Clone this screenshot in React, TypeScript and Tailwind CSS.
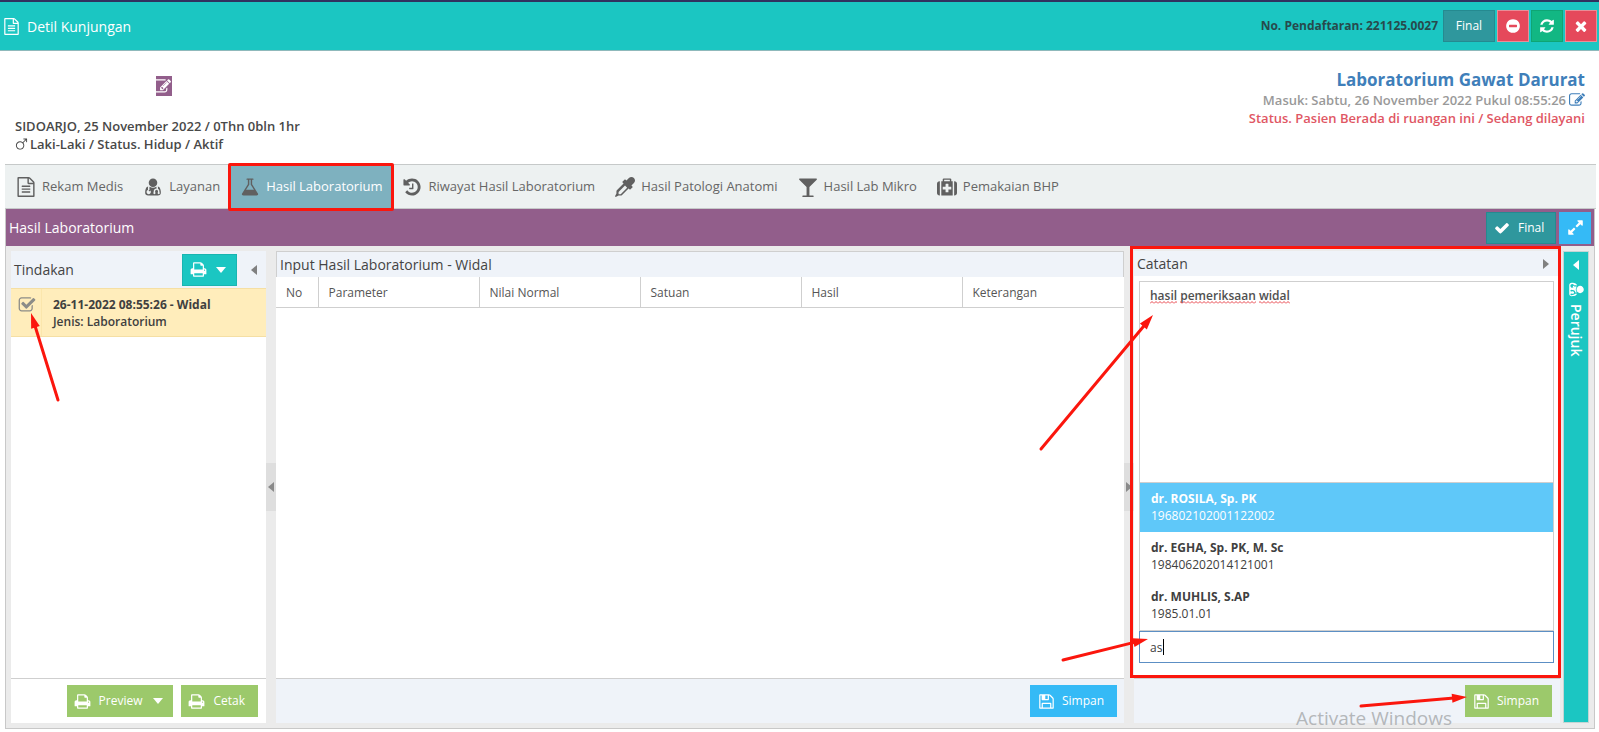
import React from 'react'

const ICONS = {
  fileText: 'M1596 380q28 28 48 76t20 88v1152q0 40-28 68t-68 28h-1344q-40 0-68-28t-28-68v-1600q0-40 28-68t68-28h896q40 0 88 20t76 48zm-444-244v376h376q-10-29-22-41l-313-313q-12-12-41-22zm384 1528v-1024h-416q-40 0-68-28t-28-68v-416h-768v1536h1280zm-1024-864q0-14 9-23t23-9h704q14 0 23 9t9 23v64q0 14-9 23t-23 9h-704q-14 0-23-9t-9-23v-64zm736 224q14 0 23 9t9 23v64q0 14-9 23t-23 9h-704q-14 0-23-9t-9-23v-64q0-14 9-23t23-9h704zm0 256q14 0 23 9t9 23v64q0 14-9 23t-23 9h-704q-14 0-23-9t-9-23v-64q0-14 9-23t23-9h704z',
  userMd: 'M640 1216q0 26-19 45t-45 19-45-19-19-45 19-45 45-19 45 19 19 45zM1600 1405q0 121-73 190t-194 69h-874q-121 0-194-69t-73-190q0-68 5.5-131t24-138 47-132.5 81-103 119-60.5q-22 52-22 120v203q-58 20-93 70t-35 111q0 80 56 136t136 56 136-56 56-136q0-61-35.5-111t-92.5-70v-203q0-62 25-93 132 104 295 104t295-104q25 31 25 93v64q-106 0-181 75t-75 181v89q-32 29-32 71 0 40 28 68t68 28 68-28 28-68q0-42-32-71v-89q0-52 38-90t90-38 90 38 38 90v89q-32 29-32 71 0 40 28 68t68 28 68-28 28-68q0-42-32-71v-89q0-68-34.5-127.5t-93.500-93.500q0-10 .5-42.500t0-48-2.500-41.500-7-47-13-40q68 15 120 60.500t81 103 47.500 132.500 24 138 5.500 131zM1280 512q0 159-112.500 271.500t-271.500 112.500-271.500-112.500-112.500-271.500 112.500-271.500 271.500-112.500 271.500 112.500 112.500 271.500z',
  flask: 'M1591 1447q56 89 21.500 153t-140.500 64h-1152q-106 0-140.500-64t21.500-153l503-793v-399h-64q-26 0-45-19t-19-45 19-45 45-19h512q26 0 45 19t19 45-19 45-45 19h-64v399zm-779-725l-272 430h712l-272-430-20-31v-436h-128v436z',
  history: 'M1664 896q0 156-61 298t-164 245-245 164-298 61q-172 0-327-72.5t-264-204.5q-7-10-6.5-22.5t8.5-20.5l137-138q10-9 25-9 16 2 23 12 73 95 179 147t225 52q104 0 198.5-40.5t163.5-109.5 109.5-163.5 40.5-198.5-40.5-198.5-109.5-163.5-163.5-109.5-198.5-40.5q-98 0-188 35.5t-160 101.5l137 138q31 30 14 69-17 40-59 40h-448q-26 0-45-19t-19-45v-448q0-42 40-59 39-17 69 14l130 129q107-101 244.5-156.5t284.5-55.5q156 0 298 61t245 164 164 245 61 298zm-640-288v448q0 14-9 23t-23 9h-320q-14 0-23-9t-9-23v-64q0-14 9-23t23-9h224v-352q0-14 9-23t23-9h64q14 0 23 9t9 23z',
  eyedropper: 'M1698 94q94 94 94 226.5t-94 225.5l-225 223 104 104q10 10 10 23t-10 23l-210 210q-10 10-23 10t-23-10l-105-105-603 603q-37 37-90 37h-203l-256 128-64-64 128-256v-203q0-53 37-90l603-603-105-105q-10-10-10-23t10-23l210-210q10-10 23-10t23 10l104 104 223-225q93-94 225.5-94t226.5 94zm-1186 1442l576-576-192-192-576 576v192h192z',
  glass: 'M1699 186q0 35-43 78l-632 632v768h320q26 0 45 19t19 45-19 45-45 19h-896q-26 0-45-19t-19-45 19-45 45-19h320v-768l-632-632q-43-43-43-78 0-23 18-36.5t38-17.5 43-4h1408q23 0 43 4t38 17.5 18 36.5z',
  medkit: 'M1280 1088v-192q0-14-9-23t-23-9h-224v-224q0-14-9-23t-23-9h-192q-14 0-23 9t-9 23v224h-224q-14 0-23 9t-9 23v192q0 14 9 23t23 9h224v224q0 14 9 23t23 9h192q14 0 23-9t9-23v-224h224q14 0 23-9t9-23zm-640-704h512v-128h-512v128zm-384 0v1280h-32q-92 0-158-66t-66-158v-832q0-92 66-158t158-66h32zm1152 0v1280h-1024v-1280h128v-160q0-40 28-68t68-28h576q40 0 68 28t28 68v160h128zm384 224v832q0 92-66 158t-158 66h-32v-1280h32q92 0 158 66t66 158z',
  print: 'M448 1536h896v-256h-896v256zm0-640h896v-384h-160q-40 0-68-28t-28-68v-160h-640v640zm1152 64q0-26-19-45t-45-19-45 19-19 45 19 45 45 19 45-19 19-45zm128 0v416q0 13-9.5 22.5t-22.5 9.5h-224v160q0 40-28 68t-68 28h-960q-40 0-68-28t-28-68v-160h-224q-13 0-22.5-9.5t-9.500-22.500v-416q0-79 56.500-135.500t135.500-56.500h64v-544q0-40 28-68t68-28h672q40 0 88 20t76 48l152 152q28 28 48 76t20 88v256h64q79 0 135.500 56.500t56.500 135.500z',
  check: 'M1671 566q0 40-28 68l-724 724-136 136q-28 28-68 28t-68-28l-136-136-362-362q-28-28-28-68t28-68l136-136q28-28 68-28t68 28l294 295 656-657q28-28 68-28t68 28l136 136q28 28 28 68z',
  times: 'M1490 1322q0 40-28 68l-136 136q-28 28-68 28t-68-28l-294-294-294 294q-28 28-68 28t-68-28l-136-136q-28-28-28-68t28-68l294-294-294-294q-28-28-28-68t28-68l136-136q28-28 68-28t68 28l294 294 294-294q28-28 68-28t68 28l136 136q28 28 28 68t-28 68l-294 294 294 294q28 28 28 68z',
  minusCircle: 'M1344 960v-128q0-26-19-45t-45-19h-768q-26 0-45 19t-19 45v128q0 26 19 45t45 19h768q26 0 45-19t19-45zm320-64q0 209-103 385.5t-279.5 279.5-385.5 103-385.5-103-279.5-279.5-103-385.5 103-385.5 279.5-279.5 385.5-103 385.5 103 279.5 279.5 103 385.5z',
  refresh: 'M1639 1056q0 5-1 7-64 268-268 434.5t-478 166.5q-146 0-282.5-55t-243.5-157l-129 129q-19 19-45 19t-45-19-19-45v-448q0-26 19-45t45-19h448q26 0 45 19t19 45-19 45l-137 137q71 66 161 102t187 36q134 0 250-65t186-179q11-17 53-117 8-23 30-23h192q13 0 22.5 9.5t9.5 22.5zm25-800v448q0 26-19 45t-45 19h-448q-26 0-45-19t-19-45 19-45l138-138q-148-137-349-137-134 0-250 65t-186 179q-11 17-53 117-8 23-30 23h-199q-13 0-22.5-9.5t-9.5-22.5v-7q65-268 270-434.5t480-166.5q146 0 284 55.5t245 156.5l130-129q19-19 45-19t45 19 19 45z',
  expand: 'M883 1056q0 13-10 23l-332 332 144 144q19 19 19 45t-19 45-45 19h-448q-26 0-45-19t-19-45v-448q0-26 19-45t45-19 45 19l144 144 332-332q10-10 23-10t23 10l114 114q10 10 10 23zm781-864v448q0 26-19 45t-45 19-45-19l-144-144-332 332q-10 10-23 10t-23-10l-114-114q-10-10-10-23t10-23l332-332-144-144q-19-19-19-45t19-45 45-19h448q26 0 45 19t19 45z',
  edit: 'M888 1184l116-116-152-152-116 116v56h96v96h56zm440-720q-16-16-33 1l-350 350q-17 17-1 33t33-1l350-350q17-17 1-33zm80 594v190q0 119-84.5 203.5t-203.5 84.5h-832q-119 0-203.5-84.5t-84.5-203.5v-832q0-119 84.5-203.5t203.5-84.5h832q63 0 117 25 15 7 18 23 3 17-9 29l-49 49q-14 14-32 8-23-6-45-6h-832q-66 0-113 47t-47 113v832q0 66 47 113t113 47h832q66 0 113-47t47-113v-126q0-13 9-22l64-64q15-15 35-7t20 29zm-96-738l288 288-672 672h-288v-288zm444 132l-92 92-288-288 92-92q28-28 68-28t68 28l152 152q28 28 28 68t-28 68z',
  save: 'M512 1536h768v-384h-768v384zm896 0h128v-896q0-14-10-38.5t-20-34.5l-281-281q-10-10-34-20t-39-10v416q0 40-28 68t-68 28h-576q-40 0-68-28t-28-68v-416h-128v1280h128v-416q0-40 28-68t68-28h832q40 0 68 28t28 68v416zm-384-928v-320q0-13-9.5-22.5t-22.5-9.5h-192q-13 0-22.5 9.5t-9.5 22.5v320q0 13 9.5 22.5t22.5 9.5h192q13 0 22.5-9.5t9.5-22.5zm640 32v928q0 40-28 68t-68 28h-1344q-40 0-68-28t-28-68v-1344q0-40 28-68t68-28h928q40 0 88 20t76 48l280 280q28 28 48 76t20 88z',
  mars: 'M1600 64q26 0 45 19t19 45v416q0 14-9 23t-23 9h-64q-14 0-23-9t-9-23v-262l-382 383q126 156 126 359 0 117-45.5 223.5t-123 184-184 123-223.5 45.5-223.5-45.5-184-123-123-184-45.5-223.5 45.5-223.5 123-184 184-123 223.5-45.5q203 0 359 126l382-382h-261q-14 0-23-9t-9-23v-64q0-14 9-23t23-9h416zm-896 1408q185 0 316.5-131.5t131.5-316.5-131.5-316.5-316.5-131.5-316.5 131.5-131.5 316.5 131.5 316.5 316.5 131.5z',
  checkSquare: 'M1472 930v318q0 119-84.5 203.5t-203.5 84.5h-832q-119 0-203.5-84.5t-84.5-203.5v-832q0-119 84.5-203.5t203.5-84.5h832q63 0 117 25 15 7 18 23 3 17-9 29l-49 49q-10 10-23 10-3 0-9-2-23-6-45-6h-832q-66 0-113 47t-47 113v832q0 66 47 113t113 47h832q66 0 113-47t47-113v-254q0-13 9-22l64-64q10-10 23-10 6 0 12 3 20 8 20 29zm231-489l-814 814q-24 24-57 24t-57-24l-430-430q-24-24-24-57t24-57l110-110q24-24 57-24t57 24l263 263 647-647q24-24 57-24t57 24l110 110q24 24 24 57t-24 57z',
}

type IconName = keyof typeof ICONS

function Icon({ name, className = 'size-4' }: { name: IconName; className?: string }) {
  return (
    <svg viewBox="0 0 1792 1792" fill="currentColor" className={`shrink-0 ${className}`} aria-hidden>
      <path d={ICONS[name]} />
    </svg>
  )
}

function Triangle({ dir, className = '' }: { dir: 'left' | 'right' | 'down'; className?: string }) {
  if (dir === 'down') {
    return (
      <svg viewBox="0 0 10 6" fill="currentColor" className={`h-[6px] w-[10px] shrink-0 ${className}`} aria-hidden>
        <path d="M0 0h10L5 6z" />
      </svg>
    )
  }
  return (
    <svg viewBox="0 0 6 10" fill="currentColor" className={`h-[10px] w-[6px] shrink-0 ${className}`} aria-hidden>
      <path d={dir === 'left' ? 'M6 0v10L0 5z' : 'M0 0v10l6-5z'} />
    </svg>
  )
}

type ArrowProps = { w: number; h: number; from: [number, number]; to: [number, number]; className: string }

// red pointer with a solid head at the `to` end
function Arrow({ w, h, from, to, className }: ArrowProps) {
  const angle = (Math.atan2(to[1] - from[1], to[0] - from[0]) * 180) / Math.PI
  const len = Math.hypot(to[0] - from[0], to[1] - from[1])
  return (
    <svg
      width={w}
      height={h}
      className={`pointer-events-none absolute z-30 overflow-visible ${className}`}
      aria-hidden
    >
      <g transform={`translate(${from[0]} ${from[1]}) rotate(${angle})`} fill="#fb160d">
        <path d={`M0 0H${len - 10}`} stroke="#fb160d" strokeWidth="3" strokeLinecap="round" />
        <path d={`M${len} 0l-15 4.500v-9z`} />
      </g>
    </svg>
  )
}

const tabs: { icon: IconName; label: string; active?: boolean }[] = [
  { icon: 'fileText', label: 'Rekam Medis' },
  { icon: 'userMd', label: 'Layanan' },
  { icon: 'flask', label: 'Hasil Laboratorium', active: true },
  { icon: 'history', label: 'Riwayat Hasil Laboratorium' },
  { icon: 'eyedropper', label: 'Hasil Patologi Anatomi' },
  { icon: 'glass', label: 'Hasil Lab Mikro' },
  { icon: 'medkit', label: 'Pemakaian BHP' },
]

const columns = ['Parameter', 'Nilai Normal', 'Satuan', 'Hasil', 'Keterangan']

const doctors = [
  { name: 'dr. ROSILA, Sp. PK', nip: '196802102001122002' },
  { name: 'dr. EGHA, Sp. PK, M. Sc', nip: '198406202014121001' },
  { name: 'dr. MUHLIS, S.AP', nip: '1985.01.01' },
]

function TitleBar() {
  return (
    <header className="flex h-[51px] items-center justify-between border-t-2 border-b border-t-[#31315f] border-b-[#8fb9bb] bg-[#1bc6c2] pr-[2px] pl-[3px] text-white">
      <h1 className="flex items-center gap-[7px] text-[14px] font-medium">
        <Icon name="fileText" className="size-[17px]" />
        Detil Kunjungan
      </h1>
      <div className="flex items-center gap-[2px]">
        <span className="mr-[3px] text-[12px] font-bold text-[#274a4c]">No. Pendaftaran: 221125.0027</span>
        <button className="h-8 w-[52px] border border-[#258a90] bg-[#2f979d] text-[12px] font-medium">Final</button>
        <button aria-label="Batal" className="flex size-8 items-center justify-center border border-[#e98d97] bg-[#e5495b]">
          <Icon name="minusCircle" />
        </button>
        <button aria-label="Muat ulang" className="flex size-8 items-center justify-center border border-[#0fa574] bg-[#12b783]">
          <Icon name="refresh" />
        </button>
        <button aria-label="Tutup" className="flex size-8 items-center justify-center border border-[#e98d97] bg-[#e5495b]">
          <Icon name="times" />
        </button>
      </div>
    </header>
  )
}

function PatientInfo() {
  return (
    <section className="flex h-[113px] justify-between px-[14px] text-[13px] font-semibold">
      <div className="pt-[25px] pl-px text-[#484848]">
        <button aria-label="Ubah pasien" className="ml-[141px] flex h-5 w-4 items-center justify-end overflow-hidden bg-[#925e8b] pr-px text-white">
          <Icon name="edit" className="size-[17px]" />
        </button>
        <p className="mt-[21px] leading-[18px]">SIDOARJO, 25 November 2022 / 0Thn 0bln 1hr</p>
        <p className="flex items-center gap-[2px] leading-[18px]">
          <Icon name="mars" className="size-[13px]" />
          Laki-Laki / Status. Hidup / Aktif
        </p>
      </div>
      <div className="pt-[17px] text-right">
        <h2 className="text-[17px] leading-6 font-bold text-[#3f7fba]">Laboratorium Gawat Darurat</h2>
        <p className="flex items-center justify-end gap-[3px] leading-[14px] text-[#999]">
          Masuk: Sabtu, 26 November 2022 Pukul 08:55:26
          <a href="#" aria-label="Ubah tanggal masuk" className="text-[#3f7fba]">
            <Icon name="edit" />
          </a>
        </p>
        <p className="leading-5 text-[#df5764]">Status. Pasien Berada di ruangan ini / Sedang dilayani</p>
      </div>
    </section>
  )
}

function Tabs() {
  return (
    <nav className="flex h-[45px] border-y border-[#c6c9c9] bg-[#edf1f1] pl-px text-[13px] text-[#666]">
      {tabs.map((t) => (
        <button
          key={t.label}
          className={`relative flex items-center gap-[6px] px-[10px] ${t.active ? 'bg-[#7eb1bf] text-white' : ''}`}
        >
          <Icon name={t.icon} className="size-5 text-[#606060]" />
          {t.label}
          {t.active && <span className="absolute -inset-x-[2px] -top-[2px] -bottom-[3px] z-20 rounded-xs border-[3px] border-[#fb160d]" />}
        </button>
      ))}
    </nav>
  )
}

function ActionsPanel() {
  return (
    <section className="relative flex w-[255px] shrink-0 flex-col bg-white">
      <div className="flex h-[37px] items-center bg-[#eff3f9] pr-[9px] pl-[3px]">
        <h3 className="flex-1 text-[14px] text-[#444]">Tindakan</h3>
        <button aria-label="Cetak tindakan" className="flex h-8 w-[55px] items-center gap-[9px] border border-[#18b5b1] bg-[#1bc6c2] pl-[7px] text-white">
          <Icon name="print" className="size-[17px]" />
          <Triangle dir="down" />
        </button>
        <button aria-label="Ciutkan" className="ml-[14px] text-[#808080]">
          <Triangle dir="left" />
        </button>
      </div>
      <label className="flex h-[49px] border-y border-[#f5dfa4] bg-[#ffedbb] text-[12px] leading-[17px] text-[#404040]">
        <span className="relative w-[31px] border-r border-[#fbe6ac] pt-[7px] pl-[7px] text-[#8c8c88]">
          <input type="checkbox" defaultChecked className="absolute size-[18px] appearance-none" />
          <Icon name="checkSquare" className="size-[18px]" />
        </span>
        <span className="flex flex-col pt-[7px] pl-[11px]">
          <b>26-11-2022 08:55:26 - Widal</b>
          <span className="font-semibold">Jenis: Laboratorium</span>
        </span>
      </label>
      <div className="flex-1" />
      <div className="flex h-[45px] items-center justify-end gap-2 border-t border-[#cfcfcf] pr-2 text-[12px] text-white">
        <button className="flex h-8 items-center gap-2 bg-[#9cc96b] px-[7px]">
          <Icon name="print" className="size-[17px]" />
          Preview
          <Triangle dir="down" className="mx-[3px]" />
        </button>
        <button className="flex h-8 items-center gap-2 bg-[#9cc96b] pr-[13px] pl-[7px]">
          <Icon name="print" className="size-[17px]" />
          Cetak
        </button>
      </div>
      <Arrow w={27} h={87} from={[27, 87]} to={[0, 0]} className="top-[62px] left-[20px]" />
    </section>
  )
}

function ResultPanel() {
  return (
    <section className="flex min-w-0 flex-1 flex-col bg-white">
      <h3 className="h-[26px] border border-b-0 border-[#cfcfcf] bg-[#eff3f9] pl-[3px] text-[14px] leading-[26px] text-[#444]">
        Input Hasil Laboratorium - Widal
      </h3>
      <table className="w-full table-fixed text-left text-[12px] text-[#555]">
        <thead>
          <tr className="h-[30px] border-b border-[#cfcfcf]">
            <th className="w-[42px] border-r border-[#cfcfcf] pt-[3px] pl-[10px] font-normal">No</th>
            {columns.map((c) => (
              <th key={c} className="w-[161px] border-r border-[#cfcfcf] pt-[3px] pl-[10px] font-normal last:w-auto last:border-r-0">
                {c}
              </th>
            ))}
          </tr>
        </thead>
        <tbody />
      </table>
      <div className="flex-1" />
      <div className="flex h-[45px] items-center justify-end border-t border-[#cfcfcf] bg-[#eff3f9] pr-[7px]">
        <button className="flex h-8 w-[87px] items-center gap-[7px] bg-[#35baf6] pl-2 text-[12px] text-white">
          <Icon name="save" className="size-[17px]" />
          Simpan
        </button>
      </div>
    </section>
  )
}

function NotesPanel() {
  return (
    <section className="relative flex w-[426px] shrink-0 flex-col bg-white">
      <div className="flex h-[25px] items-center justify-between bg-[#eff3f9] pr-[11px] pl-[3px]">
        <h3 className="text-[14px] text-[#444]">Catatan</h3>
        <button aria-label="Ciutkan catatan" className="text-[#808080]">
          <Triangle dir="right" />
        </button>
      </div>
      <div className="relative flex flex-1 flex-col pt-[5px] pr-[6px] pb-[15px] pl-[5px] text-[12px] text-[#404040]">
        <textarea
          aria-label="Catatan"
          spellCheck={false}
          defaultValue="hasil pemeriksaan widal"
          className="mb-[5px] w-full flex-1 resize-none border border-[#cfcfcf] px-[10px] py-[5px] leading-[18px] font-semibold text-[#505050] outline-none"
        />
        {/* spelling marks below the three words */}
        <svg className="pointer-events-none absolute top-[25px] left-4 h-[3px] w-[141px]" aria-hidden>
          <defs>
            <pattern id="squiggle" width="4" height="3" patternUnits="userSpaceOnUse">
              <path d="M0 2.500L2 .5l2 2" fill="none" stroke="#e8434a" />
            </pattern>
          </defs>
          <path d="M0 0h27v3H0zM30 0h76v3H30zM109 0h31v3h-31z" fill="url(#squiggle)" />
        </svg>
        <div className="relative">
          <ul role="listbox" aria-label="Dokter" className="absolute bottom-full z-10 w-full border border-[#cfcfcf] bg-white">
            {doctors.map((d, i) => (
              <li
                key={d.nip}
                role="option"
                aria-selected={i === 0}
                className={`h-[49px] px-[11px] py-[7px] leading-[17px] ${i === 0 ? 'bg-[#5fc8f9] text-white' : ''}`}
              >
                <b className="block">{d.name}</b>
                {d.nip}
              </li>
            ))}
          </ul>
          <input
            type="text"
            aria-label="Cari dokter"
            defaultValue="as"
            className="block h-8 w-full border border-[#5c8fc4] px-[10px] font-medium caret-transparent outline-none"
          />
          <span className="absolute top-2 left-6 h-4 w-px bg-black" aria-hidden />
        </div>
      </div>
      <div className="flex h-[45px] items-center justify-end border-t border-[#cfcfcf] bg-[#eff3f9] pr-2">
        <button className="flex h-8 w-[87px] items-center gap-[7px] bg-[#9cc96b] pl-2 text-[12px] text-white">
          <Icon name="save" className="size-[17px]" />
          Simpan
        </button>
      </div>
      <span className="pointer-events-none absolute -top-[5px] right-[-1px] bottom-[45px] -left-1 z-20 border-[3px] border-[#fb160d]" />
      <Arrow w={112} h={134} from={[0, 134]} to={[112, 0]} className="top-16 -left-[93px]" />
      <Arrow w={85} h={21} from={[0, 21]} to={[85, 0]} className="bottom-[63px] -left-[71px]" />
      <Arrow w={106} h={9} from={[0, 9]} to={[106, 0]} className="right-[93px] bottom-[17px]" />
      <p className="pointer-events-none absolute right-[108px] -bottom-[9px] z-10 text-[19px] leading-7 whitespace-nowrap text-[#b4b7ba]">
        Activate Windows
      </p>
    </section>
  )
}

function Splitter({ dir }: { dir: 'left' | 'right' }) {
  return (
    <div className="flex w-[10px] shrink-0 items-center">
      <button aria-label="Geser panel" className="flex h-12 w-full items-center justify-center bg-[#dedede] text-[#8a8a8a]">
        <Triangle dir={dir} />
      </button>
    </div>
  )
}

export default function App() {
  return (
    <div className="flex min-h-screen flex-col bg-white pb-[3px] font-['Open_Sans',sans-serif]">
      <TitleBar />
      <PatientInfo />
      <main className="mr-[3px] ml-[5px] flex flex-1 flex-col">
        <Tabs />
        <div className="mr-px flex flex-1 flex-col border border-t-0 border-[#c8c8c8] bg-[#ebebeb]">
          <div className="flex h-[37px] items-center gap-[3px] bg-[#925e8b] pr-[3px] pl-[3px] text-white">
            <h2 className="flex-1 text-[14px]">Hasil Laboratorium</h2>
            <button className="flex h-8 w-[70px] items-center gap-2 border border-[#258a90] bg-[#2f979d] pl-[7px] text-[12px] font-medium">
              <Icon name="check" />
              Final
            </button>
            <button aria-label="Perbesar" className="flex size-8 items-center justify-center bg-[#35baf6]">
              <Icon name="expand" className="size-[17px]" />
            </button>
          </div>
          <div className="flex flex-1 p-[5px]">
            <ActionsPanel />
            <Splitter dir="left" />
            <ResultPanel />
            <Splitter dir="right" />
            <NotesPanel />
            <aside className="ml-[3px] flex w-[26px] flex-col items-center border border-[#c3d5d4] bg-[#1bc6c2] pt-2 text-white">
              <button aria-label="Buka perujuk">
                <Triangle dir="left" />
              </button>
              <Icon name="userMd" className="mt-[11px] mb-[6px] size-[17px] rotate-90" />
              <span className="text-[14px] leading-5 font-semibold [writing-mode:vertical-rl]">Perujuk</span>
            </aside>
          </div>
        </div>
      </main>
    </div>
  )
}
